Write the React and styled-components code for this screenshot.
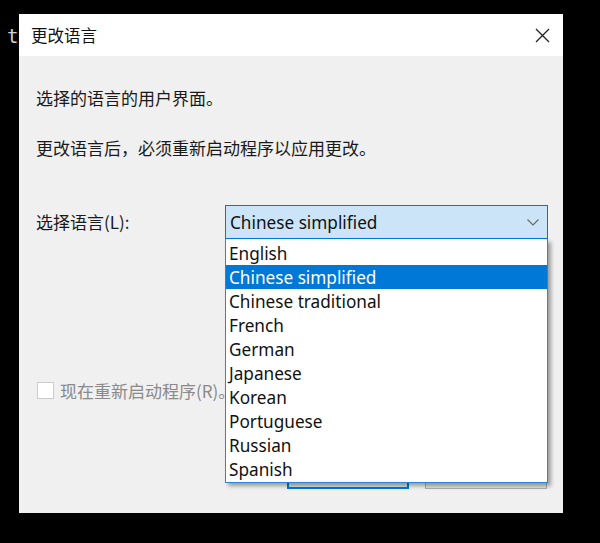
import React from 'react';
import styled, { createGlobalStyle } from 'styled-components';

const GlobalStyle = createGlobalStyle`
  html, body {
    margin: 0;
    padding: 0;
    background: #000;
  }
  body {
    font-family: "Noto Sans", "Noto Sans CJK SC", sans-serif;
  }
`;

const Screen = styled.div`
  width: 600px;
  height: 543px;
  background: #000;
  display: flex;
  align-items: flex-start;
  padding-top: 14px;
  box-sizing: border-box;
  overflow: hidden;
`;

const ConsoleText = styled.div`
  width: 19px;
  padding: 10px 0 0 7px;
  box-sizing: border-box;
  color: #d0d0d0;
  font-family: "DejaVu Sans Mono", monospace;
  font-size: 19px;
  line-height: 24px;
`;

const Dialog = styled.div`
  width: 544px;
  height: 499px;
  background: #f0f0f0;
  display: flex;
  flex-direction: column;
`;

const TitleBar = styled.div`
  height: 42px;
  background: #fff;
  display: flex;
  align-items: center;
  justify-content: space-between;
  padding: 0 13px 0 12px;
  flex-shrink: 0;
`;

const Title = styled.span`
  font-family: "Noto Sans CJK SC", sans-serif;
  font-size: 16.5px;
  color: #111;
`;

const CloseButton = styled.button`
  border: none;
  background: transparent;
  padding: 0;
  width: 16px;
  height: 16px;
  display: flex;
  align-items: center;
  justify-content: center;
`;

const Body = styled.div`
  flex: 1;
  padding: 30px 15px 0 17px;
  display: flex;
  flex-direction: column;
`;

const Text = styled.p`
  margin: 0;
  margin-top: ${({ gap }) => gap || 0}px;
  font-family: "Noto Sans CJK SC", sans-serif;
  font-size: 17px;
  line-height: 24px;
  color: #1a1a1a;
`;

const FormRow = styled.div`
  display: flex;
  align-items: center;
  margin-top: 45px;
`;

const Label = styled.label`
  width: 189px;
  flex-shrink: 0;
  font-family: "Noto Sans CJK SC", sans-serif;
  font-size: 17px;
  color: #1a1a1a;
  padding-bottom: 2px;
`;

const ComboWrap = styled.div`
  position: relative;
  width: 323px;
`;

const Combo = styled.div`
  height: 34px;
  box-sizing: border-box;
  border: 1px solid #0078d7;
  background: #cce4f7;
  display: flex;
  align-items: center;
  justify-content: space-between;
  padding: 0 8px 0 4px;
  font-size: 17.2px;
  color: #111;
`;

const List = styled.ul`
  position: absolute;
  top: 100%;
  left: 0;
  width: 100%;
  box-sizing: border-box;
  margin: 0;
  padding: 2px 0 1px;
  list-style: none;
  background: #fff;
  border: 1px solid #2b86d9;
  border-top: none;
  box-shadow: 3px 3px 4px rgba(0, 0, 0, 0.35);
  z-index: 2;
`;

const Item = styled.li`
  height: 24px;
  line-height: 25px;
  padding-left: 3px;
  font-size: 17.2px;
  color: ${({ selected }) => (selected ? '#fff' : '#111')};
  background: ${({ selected }) => (selected ? '#0078d7' : 'transparent')};
`;

const CheckRow = styled.div`
  display: flex;
  align-items: center;
  gap: 6px;
  margin-top: 139px;
  height: 24px;
`;

const Box = styled.span`
  width: 17px;
  height: 17px;
  box-sizing: border-box;
  border: 1px solid #cccccc;
  background: #fff;
  margin-left: 1px;
`;

const CheckText = styled.span`
  font-family: "Noto Sans CJK SC", sans-serif;
  font-size: 17px;
  color: #8a8a8a;
`;

const Buttons = styled.div`
  display: flex;
  justify-content: flex-end;
  gap: 16px;
  margin-top: 57px;
  padding-right: 1px;
`;

const Button = styled.button`
  width: 122px;
  height: 30px;
  box-sizing: border-box;
  border: ${({ primary }) => (primary ? '2px solid #0078d7' : '1px solid #adadad')};
  background: #e1e1e1;
  font-family: "Noto Sans CJK SC", sans-serif;
  font-size: 16px;
  color: #111;
`;

const languages = [
  'English',
  'Chinese simplified',
  'Chinese traditional',
  'French',
  'German',
  'Japanese',
  'Korean',
  'Portuguese',
  'Russian',
  'Spanish',
];

export default function App() {
  const selected = 'Chinese simplified';
  return (
    <>
      <GlobalStyle />
      <Screen>
        <ConsoleText>t</ConsoleText>
        <Dialog>
          <TitleBar>
            <Title>更改语言</Title>
            <CloseButton aria-label="关闭">
              <svg width="15" height="15" viewBox="0 0 15 15">
                <path d="M1 1L14 14M14 1L1 14" stroke="#222" strokeWidth="1.3" />
              </svg>
            </CloseButton>
          </TitleBar>
          <Body>
            <Text>选择的语言的用户界面。</Text>
            <Text gap={26}>更改语言后，必须重新启动程序以应用更改。</Text>
            <FormRow>
              <Label>选择语言(L):</Label>
              <ComboWrap>
                <Combo>
                  <span>{selected}</span>
                  <svg width="12" height="7" viewBox="0 0 12 7">
                    <path d="M0.5 0.5L6 6L11.5 0.5" fill="none" stroke="#666" strokeWidth="1.1" />
                  </svg>
                </Combo>
                <List>
                  {languages.map((lang) => (
                    <Item key={lang} selected={lang === selected}>
                      {lang}
                    </Item>
                  ))}
                </List>
              </ComboWrap>
            </FormRow>
            <CheckRow>
              <Box />
              <CheckText>现在重新启动程序(R)。</CheckText>
            </CheckRow>
            <Buttons>
              <Button primary>确定</Button>
              <Button>取消</Button>
            </Buttons>
          </Body>
        </Dialog>
      </Screen>
    </>
  );
}
